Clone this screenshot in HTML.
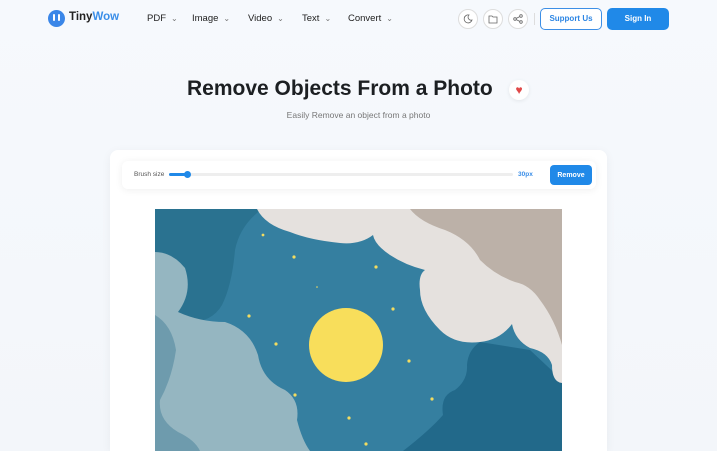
<!DOCTYPE html>
<html><head><meta charset="utf-8"><style>
*{margin:0;padding:0;box-sizing:border-box}
body{width:717px;height:451px;overflow:hidden;background:#f5f8fc;font-family:"Liberation Sans",sans-serif;position:relative;color:#222}
.abs{position:absolute}
.nav{font-size:9.5px;color:#222;top:13px}
.nav span{font-size:8px;color:#777;margin-left:5px}
.ic{width:20px;height:20px;border:1px solid #ddd;border-radius:50%;top:9px;background:#fff;display:flex;align-items:center;justify-content:center}
</style></head><body>
<div class="abs" style="left:0;top:0;width:717px;height:451px;background:linear-gradient(180deg,#f6f9fd,#f3f6fa)"></div>
<div class="abs" style="left:48px;top:10px;width:17px;height:17px;border-radius:50%;background:#3a86e8"></div>
<div class="abs" style="left:53px;top:14px;width:2px;height:7px;background:#fff;border-radius:1px"></div>
<div class="abs" style="left:58px;top:14px;width:2px;height:7px;background:#fff;border-radius:1px"></div>
<div class="abs" style="left:69px;top:11px;font-size:11.5px;font-weight:bold">Tiny<span style="color:#3a8ee8">Wow</span></div>
<div class="abs nav" style="left:147px">PDF<span>⌄</span></div>
<div class="abs nav" style="left:192px">Image<span>⌄</span></div>
<div class="abs nav" style="left:248px">Video<span>⌄</span></div>
<div class="abs nav" style="left:302px">Text<span>⌄</span></div>
<div class="abs nav" style="left:348px">Convert<span>⌄</span></div>
<div class="abs ic" style="left:458px"><svg width="10" height="10" viewBox="0 0 10 10"><path d="M6 1A4 4 0 1 0 9 6 3 3 0 0 1 6 1z" fill="none" stroke="#666" stroke-width=".8"/></svg></div>
<div class="abs ic" style="left:483px"><svg width="10" height="10" viewBox="0 0 10 10"><path d="M1 2h3l1 1h4v6H1z" fill="none" stroke="#666" stroke-width=".8"/></svg></div>
<div class="abs ic" style="left:508px"><svg width="10" height="10" viewBox="0 0 10 10"><circle cx="2" cy="5" r="1.3" fill="none" stroke="#666" stroke-width=".8"/><circle cx="8" cy="2" r="1.3" fill="none" stroke="#666" stroke-width=".8"/><circle cx="8" cy="8" r="1.3" fill="none" stroke="#666" stroke-width=".8"/><path d="M3 4.5l4-2M3 5.5l4 2" stroke="#666" stroke-width=".8"/></svg></div>
<div class="abs" style="left:534px;top:13px;width:1px;height:12px;background:#ddd"></div>
<div class="abs" style="left:540px;top:8px;width:62px;height:22px;border:1px solid #3d8fe6;border-radius:5px;background:#fff;color:#2d86e4;font-size:8px;font-weight:bold;text-align:center;line-height:20px">Support Us</div>
<div class="abs" style="left:607px;top:8px;width:62px;height:22px;border-radius:5px;background:#2089e8;color:#fff;font-size:8px;font-weight:bold;text-align:center;line-height:22px">Sign In</div>
<div class="abs" style="left:187px;top:77px;font-size:21px;font-weight:bold;color:#1c1f22">Remove Objects From a Photo</div>
<div class="abs" style="left:509px;top:80px;width:20px;height:20px;border-radius:50%;background:#fff;box-shadow:0 1px 4px rgba(0,0,0,.08);color:#e04848;font-size:12px;text-align:center;line-height:20px">♥</div>
<div class="abs" style="left:0;width:717px;top:110px;text-align:center;font-size:8.5px;color:#777">Easily Remove an object from a photo</div>
<div class="abs" style="left:110px;top:150px;width:497px;height:301px;background:#fff;border-radius:8px 8px 0 0;box-shadow:0 2px 10px rgba(0,0,0,.05)"></div>
<div class="abs" style="left:122px;top:161px;width:474px;height:28px;background:#fff;border-radius:6px;box-shadow:0 1px 8px rgba(0,0,0,.07)"></div>
<div class="abs" style="left:134px;top:171px;font-size:6.5px;color:#555">Brush size</div>
<div class="abs" style="left:169px;top:173px;width:344px;height:3px;border-radius:2px;background:#eee"></div>
<div class="abs" style="left:169px;top:173px;width:18px;height:3px;border-radius:2px;background:#2089e8"></div>
<div class="abs" style="left:184px;top:171px;width:7px;height:7px;border-radius:50%;background:#2089e8"></div>
<div class="abs" style="left:518px;top:171px;font-size:6.5px;color:#3a8ee8;font-weight:bold">30px</div>
<div class="abs" style="left:550px;top:165px;width:42px;height:20px;border-radius:4px;background:#2089e8;color:#fff;font-size:7px;font-weight:bold;display:flex;align-items:center;justify-content:center">Remove</div>
<svg class="abs" style="left:155px;top:209px" width="407" height="242" viewBox="155 209 407 242">
<rect x="155" y="209" width="407" height="242" fill="#357fa0"/>
<path d="M155,209 L262,209 Q240,225 235,250 Q232,285 222,305 Q212,322 190,322 L155,320Z" fill="#2a7290"/>
<path d="M562,380 L562,451 L403,451 Q430,430 443,415 Q440,395 455,390 Q468,380 467,365 Q468,350 480,342 L530,350Z" fill="#22698a"/>
<path d="M257,209 L562,209 L562,383 Q552,382 552,365 Q548,352 530,348 Q515,340 512,324 Q500,340 480,342 Q455,345 440,330 Q420,310 420,290 Q418,275 425,270 Q405,265 390,255 Q375,245 373,235 Q360,245 340,243 Q310,240 290,232 Q265,225 257,209Z" fill="#e5e1de"/>
<path d="M410,209 L562,209 L562,345 Q555,320 540,300 Q530,285 515,282 Q495,275 480,260 Q470,240 445,230 Q420,222 410,209Z" fill="#bcb1a8"/>
<path d="M155,252 Q172,252 185,268 Q193,292 178,312 Q200,322 225,322 Q250,330 258,355 Q262,380 285,390 Q300,400 297,420 Q302,440 310,451 L155,451Z" fill="#95b6c1"/>
<path d="M155,315 Q172,325 176,350 Q172,378 160,400 Q158,420 178,432 Q195,440 200,451 L155,451Z" fill="#6e9bad"/>
<circle cx="346" cy="345" r="37" fill="#f8de5b"/>
<g fill="#f3dc60">
<circle cx="263" cy="235" r="1.4"/><circle cx="294" cy="257" r="1.6"/><circle cx="376" cy="267" r="1.6"/><circle cx="393" cy="309" r="1.6"/><circle cx="249" cy="316" r="1.6"/><circle cx="276" cy="344" r="1.6"/><circle cx="409" cy="361" r="1.6"/><circle cx="295" cy="395" r="1.6"/><circle cx="432" cy="399" r="1.6"/><circle cx="349" cy="418" r="1.6"/><circle cx="366" cy="444" r="1.6"/><circle cx="317" cy="287" r=".8"/>
</g>
</svg>
</body></html>
